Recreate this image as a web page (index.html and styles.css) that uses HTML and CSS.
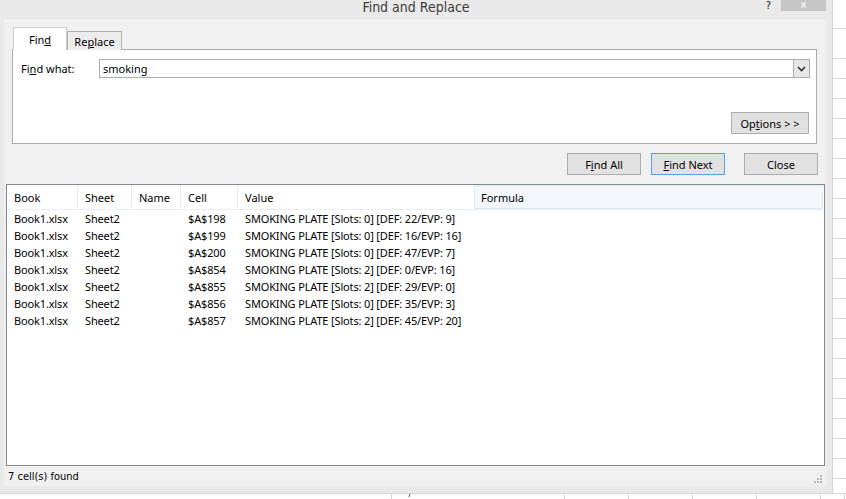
FILE: index.html
```html
<!DOCTYPE html>
<html>
<head>
<meta charset="utf-8">
<title>Find and Replace</title>
<link rel="stylesheet" href="styles.css">
</head>
<body>
<div class="screen">
  <div class="window">
    <div class="titlebar">
      <div></div>
      <div class="title">Find and Replace</div>
      <div class="controls">
        <span class="help">?</span>
        <span class="close">x</span>
      </div>
    </div>

    <div class="client">
      <div class="tabs">
        <div class="tab active">Fin<u>d</u></div>
        <div class="tab">Re<u>p</u>lace</div>
      </div>
      <div class="tab-page">
        <div class="find-row">
          <label class="find-label">Fi<u>n</u>d what:</label>
          <div class="combo">
            <span class="combo-text">smoking</span>
            <span class="combo-btn">
              <svg width="9" height="6" viewBox="0 0 9 6"><polyline points="1,1 4.5,4.5 8,1" fill="none" stroke="#333" stroke-width="1.6"/></svg>
            </span>
          </div>
        </div>
        <div class="options-row">
          <button class="btn options">Op<u>t</u>ions &gt; &gt;</button>
        </div>
      </div>

      <div class="actions">
        <button class="btn find-all">F<u>i</u>nd All</button>
        <button class="btn find-next"><u>F</u>ind Next</button>
        <button class="btn close-btn">Close</button>
      </div>

      <div class="results">
        <div class="row head">
          <div>Book</div><div>Sheet</div><div>Name</div><div>Cell</div><div>Value</div><div class="hover">Formula</div>
        </div>
        <div class="row"><div>Book1.xlsx</div><div>Sheet2</div><div></div><div>$A$198</div><div>SMOKING PLATE [Slots: 0] [DEF: 22/EVP: 9]</div><div></div></div>
        <div class="row"><div>Book1.xlsx</div><div>Sheet2</div><div></div><div>$A$199</div><div>SMOKING PLATE [Slots: 0] [DEF: 16/EVP: 16]</div><div></div></div>
        <div class="row"><div>Book1.xlsx</div><div>Sheet2</div><div></div><div>$A$200</div><div>SMOKING PLATE [Slots: 0] [DEF: 47/EVP: 7]</div><div></div></div>
        <div class="row"><div>Book1.xlsx</div><div>Sheet2</div><div></div><div>$A$854</div><div>SMOKING PLATE [Slots: 2] [DEF: 0/EVP: 16]</div><div></div></div>
        <div class="row"><div>Book1.xlsx</div><div>Sheet2</div><div></div><div>$A$855</div><div>SMOKING PLATE [Slots: 2] [DEF: 29/EVP: 0]</div><div></div></div>
        <div class="row"><div>Book1.xlsx</div><div>Sheet2</div><div></div><div>$A$856</div><div>SMOKING PLATE [Slots: 0] [DEF: 35/EVP: 3]</div><div></div></div>
        <div class="row"><div>Book1.xlsx</div><div>Sheet2</div><div></div><div>$A$857</div><div>SMOKING PLATE [Slots: 2] [DEF: 45/EVP: 20]</div><div></div></div>
      </div>

      <div class="status">
        <span>7 cell(s) found</span>
        <svg class="grip" width="8" height="8" viewBox="0 0 8 8">
          <rect x="6" y="0" width="2" height="2" fill="#b8b8b8"/>
          <rect x="3" y="3" width="2" height="2" fill="#b8b8b8"/>
          <rect x="6" y="3" width="2" height="2" fill="#b8b8b8"/>
          <rect x="0" y="6" width="2" height="2" fill="#b8b8b8"/>
          <rect x="3" y="6" width="2" height="2" fill="#b8b8b8"/>
          <rect x="6" y="6" width="2" height="2" fill="#b8b8b8"/>
        </svg>
      </div>
    </div>
  </div>

  <div class="sheet-right">
    <div class="first-row"></div>
    <div class="second-row"></div>
    <div class="rows"></div>
  </div>
</div>

<div class="sheet-bottom">
  <div class="cell" style="width:392px"></div>
  <div class="cell mark" style="width:173px"><span></span></div>
  <div class="cell" style="width:64px"></div>
  <div class="cell" style="width:64px"></div>
  <div class="cell" style="width:64px"></div>
  <div class="cell" style="width:64px"></div>
  <div class="cell" style="width:24px"></div>
</div>
</body>
</html>
```

FILE: styles.css
```css
body{margin:0;background:#fff;font-family:"Noto Sans","Open Sans",sans-serif;font-size:11px;color:#000;overflow:hidden;}
u{text-decoration:underline;text-underline-offset:1px;}

.screen{display:flex;height:493px;}
.window{width:832px;height:493px;background:#e9e9e9;display:flex;flex-direction:column;flex:none;}

.titlebar{height:20px;display:grid;grid-template-columns:1fr auto 1fr;align-items:start;}
.title{font-family:"DejaVu Sans Condensed","DejaVu Sans",sans-serif;font-stretch:condensed;font-size:14px;color:#3c3c3c;line-height:15px;margin-top:0;}
.controls{display:flex;justify-content:flex-end;padding-right:6px;}
.help{font-family:"DejaVu Sans Condensed",sans-serif;font-size:11px;color:#222;line-height:12px;margin-right:10px;}
.close{width:45px;height:11px;background:#c6c6c6;color:#fff;text-align:center;font-family:"DejaVu Sans",sans-serif;font-size:10px;line-height:9px;}

.client{flex:1;margin:0 6px 7px 4px;background:#f0f0f0;border-top:1px solid #f7f7f7;display:flex;flex-direction:column;min-height:0;}
.tabs{display:flex;align-items:flex-end;margin-top:7px;padding-left:9px;height:22px;position:relative;z-index:1;}
.tab{width:53px;height:18px;border:1px solid #adadad;border-bottom:none;background:#ececec;text-align:center;line-height:19px;font-size:11px;}
.tab.active{height:22px;background:#fff;border-color:#d0d0d0;line-height:23px;width:52px;}

.tab-page{margin:-1px 0 0 8px;width:803px;height:93px;border:1px solid #adadad;background:#fff;display:flex;flex-direction:column;}
.find-row{display:flex;align-items:center;margin-top:9px;padding-left:8px;}
.find-label{width:78px;}
.combo{width:709px;height:17px;border:1px solid #adadad;display:flex;align-items:center;justify-content:space-between;}
.combo-text{padding-left:3px;}
.combo-btn{width:16px;height:17px;background:#e6e6e6;border-left:1px solid #adadad;box-sizing:border-box;display:flex;align-items:center;justify-content:center;}
.options-row{margin-top:auto;display:flex;justify-content:flex-end;padding:0 7px 9px 0;}

.btn{font-family:inherit;font-size:11px;color:#000;background:#e1e1e1;border:1px solid #adadad;padding:0;height:22px;width:74px;margin:0;}
.options{width:78px;}
.actions{display:flex;justify-content:flex-end;margin-top:9px;padding-right:8px;}
.find-next{margin-left:10px;border-color:#5aa0e2;}
.close-btn{margin-left:19px;}

.results{margin:9px 1px 0 2px;height:280px;border:1px solid #828790;background:#fff;}
.row{display:grid;grid-template-columns:71px 54px 49px 57px 237px 1fr;height:17px;line-height:17px;letter-spacing:-0.15px;}
.row > div{padding-left:7px;white-space:nowrap;overflow:hidden;}
.row.head{height:24px;line-height:26px;border-bottom:1px solid #e8eef6;letter-spacing:0;}
.row.head > div{border-right:1px solid #e6ecf3;}
.row.head > div.hover{background:#f3f7fc;border:1px solid #dfe9f5;border-left:none;padding-left:6px;line-height:24px;margin-right:1px;}

.status{height:20px;display:flex;align-items:center;justify-content:space-between;padding:0 4px 0 4px;font-family:"DejaVu Sans Condensed",sans-serif;font-stretch:condensed;font-size:11px;}
.grip{margin-top:6px;}

.sheet-right{flex:1;border-left:1px solid #d4d4d4;}
.first-row{height:28px;border-bottom:1px solid #d8d8d8;}
.second-row{height:29px;border-bottom:1px solid #d8d8d8;}
.rows{height:434px;background:repeating-linear-gradient(to bottom,transparent 0,transparent 19px,#d8d8d8 19px,#d8d8d8 20px);}

.sheet-bottom{display:flex;height:6px;border-top:1px solid #d4d4d4;border-bottom:1px solid #d4d4d4;}
.cell{border-right:1px solid #d4d4d4;box-sizing:border-box;height:5px;flex:none;}
.mark span{display:block;margin-left:17px;width:1px;height:3px;background:#2b5aa8;transform:skewX(-20deg);}
```
